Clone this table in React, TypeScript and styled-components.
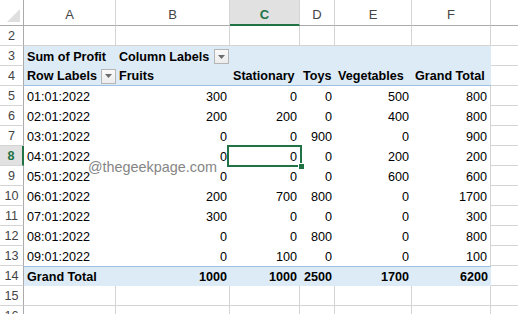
import { Fragment } from "react";
import styled, { createGlobalStyle } from "styled-components";

const GREEN = "#217346";
const GRID = "#d4d4d4";
const HEAD_LINE = "#ababab";
const BLUE_FILL = "#ddebf7";
const BLUE_LINE = "#9bc2e6";

const GlobalStyle = createGlobalStyle`
  html, body {
    margin: 0;
    padding: 0;
    background: #fff;
    overflow: hidden;
  }
  body {
    font-family: "Liberation Sans", Arial, sans-serif;
  }
`;

const Page = styled.div`
  position: relative;
  width: 518px;
  height: 314px;
  overflow: hidden;
`;

const Sheet = styled.div`
  display: grid;
  grid-template-columns: 24px 92px 114px 70px 35px 77px 79px 100px;
  grid-template-rows: 26px;
  grid-auto-rows: 20px;
  font-size: 12.6px;
  color: #000;
`;

const Corner = styled.div`
  display: flex;
  align-items: flex-end;
  justify-content: flex-end;
  padding: 0 3px 3px 0;
  box-sizing: border-box;
  border-right: 1px solid ${HEAD_LINE};
  border-bottom: 1px solid ${HEAD_LINE};
`;

const ColHead = styled.div<{ $active?: boolean }>`
  display: flex;
  justify-content: center;
  align-items: center;
  padding-top: 4px;
  box-sizing: border-box;
  font-size: 13px;
  color: ${(p) => (p.$active ? GREEN : "#444")};
  font-weight: ${(p) => (p.$active ? 700 : 400)};
  background: ${(p) => (p.$active ? "#e1e1e1" : "#fff")};
  border-right: 1px solid ${GRID};
  border-bottom: ${(p) => (p.$active ? `2px solid ${GREEN}` : `1px solid ${HEAD_LINE}`)};
`;

const RowHead = styled.div<{ $active?: boolean }>`
  display: flex;
  justify-content: center;
  align-items: center;
  padding-top: 1px;
  box-sizing: border-box;
  font-size: 12.6px;
  color: ${(p) => (p.$active ? GREEN : "#444")};
  font-weight: ${(p) => (p.$active ? 700 : 400)};
  background: ${(p) => (p.$active ? "#e1e1e1" : "#fff")};
  border-bottom: 1px solid ${GRID};
  border-right: ${(p) => (p.$active ? `2px solid ${GREEN}` : `1px solid ${HEAD_LINE}`)};
`;

type Kind = "plain" | "band" | "body";

const Cell = styled.div<{
  $kind: Kind;
  $align?: "left" | "right";
  $bold?: boolean;
  $under?: boolean;
  $over?: boolean;
  $edge?: boolean;
  $selected?: boolean;
}>`
  position: relative;
  display: flex;
  align-items: center;
  justify-content: ${(p) => (p.$align === "right" ? "flex-end" : "space-between")};
  gap: 4px;
  padding: 1px 3px 0 3px;
  box-sizing: border-box;
  white-space: nowrap;
  font-weight: ${(p) => (p.$bold ? 700 : 400)};
  background: ${(p) => (p.$kind === "band" ? BLUE_FILL : "#fff")};
  border-right: ${(p) =>
    p.$kind === "plain" || p.$edge ? `1px solid ${GRID}` : "none"};
  border-bottom: ${(p) =>
    p.$kind === "plain"
      ? `1px solid ${GRID}`
      : p.$under
      ? `1px solid ${BLUE_LINE}`
      : "none"};
  border-top: ${(p) => (p.$over ? `1px solid ${BLUE_LINE}` : "none")};

  ${(p) =>
    p.$selected &&
    `
    &::before {
      content: "";
      position: absolute;
      top: -1px;
      left: -3px;
      right: -2px;
      bottom: -1px;
      border: 2px solid ${GREEN};
      z-index: 2;
    }
    &::after {
      content: "";
      position: absolute;
      right: -4px;
      bottom: -3px;
      width: 5px;
      height: 5px;
      background: ${GREEN};
      border-left: 1px solid #fff;
      border-top: 1px solid #fff;
      z-index: 3;
    }
  `}
`;

const FilterButton = styled.span`
  flex: none;
  display: flex;
  align-items: center;
  justify-content: center;
  width: 15px;
  height: 15px;
  margin-right: -2px;
  box-sizing: border-box;
  border: 1px solid #b5b5b5;
  background: linear-gradient(#fafafa, #ececec);
`;

const Watermark = styled.div`
  position: absolute;
  left: 88px;
  top: 159px;
  font-family: "Liberation Sans", Arial, sans-serif;
  font-size: 14.4px;
  color: #858585;
  pointer-events: none;
`;

const columns = ["A", "B", "C", "D", "E", "F", "G"];

const body: [string, number, number, number, number, number][] = [
  ["01:01:2022", 300, 0, 0, 500, 800],
  ["02:01:2022", 200, 200, 0, 400, 800],
  ["03:01:2022", 0, 0, 900, 0, 900],
  ["04:01:2022", 0, 0, 0, 200, 200],
  ["05:01:2022", 0, 0, 0, 600, 600],
  ["06:01:2022", 200, 700, 800, 0, 1700],
  ["07:01:2022", 300, 0, 0, 0, 300],
  ["08:01:2022", 0, 0, 800, 0, 800],
  ["09:01:2022", 0, 100, 0, 0, 100],
];

const headers = ["Fruits", "Stationary", "Toys", "Vegetables", "Grand Total"];
const totals = ["Grand Total", 1000, 1000, 2500, 1700, 6200];

function Arrow() {
  return (
    <svg width="7" height="4" viewBox="0 0 7 4">
      <polygon points="0,0 7,0 3.5,4" fill="#6d6d6d" />
    </svg>
  );
}

function PlainRow({ n }: { n: number }) {
  return (
    <>
      <RowHead>{n}</RowHead>
      {columns.map((c) => (
        <Cell key={c} $kind="plain" />
      ))}
    </>
  );
}

function App() {
  return (
    <Page>
      <GlobalStyle />
      <Sheet>
        <Corner>
          <svg width="13" height="13" viewBox="0 0 13 13">
            <polygon points="13,0 13,13 0,13" fill="#dfdfdf" />
          </svg>
        </Corner>
        {columns.map((c) => (
          <ColHead key={c} $active={c === "C"}>
            {c}
          </ColHead>
        ))}

        <PlainRow n={2} />

        <RowHead>3</RowHead>
        <Cell $kind="band" $bold>
          Sum of Profit
        </Cell>
        <Cell $kind="band" $bold>
          Column Labels
          <FilterButton>
            <Arrow />
          </FilterButton>
        </Cell>
        <Cell $kind="band" />
        <Cell $kind="band" />
        <Cell $kind="band" />
        <Cell $kind="band" />
        <Cell $kind="plain" />

        <RowHead>4</RowHead>
        <Cell $kind="band" $bold $under>
          Row Labels
          <FilterButton>
            <Arrow />
          </FilterButton>
        </Cell>
        {headers.map((h) => (
          <Cell key={h} $kind="band" $bold $under>
            {h}
          </Cell>
        ))}
        <Cell $kind="plain" />

        {body.map((row, i) => (
          <Fragment key={row[0]}>
            <RowHead $active={i === 3}>{i + 5}</RowHead>
            {row.map((v, j) => (
              <Cell
                key={j}
                $kind="body"
                $align={j === 0 ? "left" : "right"}
                $edge={j === 5}
                $selected={i === 3 && j === 2}
              >
                {v}
              </Cell>
            ))}
            <Cell $kind="plain" />
          </Fragment>
        ))}

        <RowHead>14</RowHead>
        {totals.map((v, j) => (
          <Cell key={j} $kind="band" $bold $over $align={j === 0 ? "left" : "right"}>
            {v}
          </Cell>
        ))}
        <Cell $kind="plain" />

        <PlainRow n={15} />
        <PlainRow n={16} />
      </Sheet>
      <Watermark>@thegeekpage.com</Watermark>
    </Page>
  );
}

export default App;
